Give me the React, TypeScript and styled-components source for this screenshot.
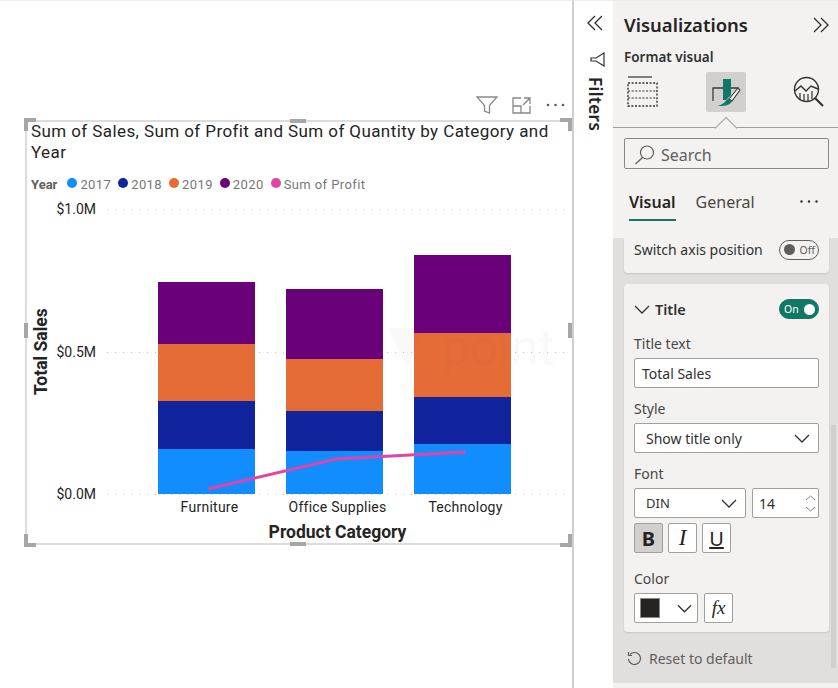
import styled, { createGlobalStyle } from "styled-components";

const chartFont = `Roboto, "Liberation Sans", sans-serif`;
const paneFont = `"Noto Sans", "Open Sans", sans-serif`;

const GlobalStyle = createGlobalStyle`
  html, body { margin: 0; padding: 0; background: #ffffff; }
  #root { width: 838px; height: 688px; overflow: hidden; }
  * { box-sizing: border-box; }
`;

const series = { y2017: "#118dff", y2018: "#12239e", y2019: "#e66c37", y2020: "#6b007b" };

const categories = [
  { name: "Furniture", parts: [45.5, 48, 57, 61.5] },
  { name: "Office Supplies", parts: [43.5, 39.5, 52, 70] },
  { name: "Technology", parts: [50.5, 46.5, 64.5, 77.5] },
];

const segmentColors = [series.y2017, series.y2018, series.y2019, series.y2020];

const legend = [
  { label: "2017", color: series.y2017 },
  { label: "2018", color: series.y2018 },
  { label: "2019", color: series.y2019 },
  { label: "2020", color: series.y2020 },
  { label: "Sum of Profit", color: "#e044a7" },
];

function Chevron({ width = 16 }: { width?: number }) {
  return (
    <svg width={width} height={9} viewBox="0 0 16 9" fill="none" stroke="#323130" strokeWidth="1.3">
      <path d="M1 1l7 7 7-7" />
    </svg>
  );
}

function FormatIcon() {
  return (
    <svg width="34" height="34" viewBox="0 0 34 34" fill="none">
      <path d="M4 26V13H14M22 13H29V18" stroke="#3b3a39" strokeWidth="1.3" />
      <path d="M14 4H22V20L17 25H14Z" fill="#117865" />
      <path d="M20 24L29 13L31 15L23 26Z" fill="#f3f2f1" stroke="#3b3a39" strokeWidth="1.1" />
      <path d="M9 31C14 31 21 31 23 26L20 23.500C17 24 16 29 9 31Z" fill="#117865" />
    </svg>
  );
}

function BuildIcon() {
  return (
    <svg width="32" height="32" viewBox="0 0 32 32" fill="none" stroke="#323130">
      <path d="M1 1h24" strokeWidth="1.2" />
      <rect x="1" y="7" width="29" height="23" strokeWidth="1.4" strokeDasharray="2 1.600" />
      <path d="M1 15h29M1 22h29" strokeWidth="1.2" strokeDasharray="2 1.600" />
    </svg>
  );
}

function AnalyticsIcon() {
  return (
    <svg width="32" height="32" viewBox="0 0 32 32" fill="none" stroke="#323130" strokeWidth="1.4">
      <circle cx="13.500" cy="13.500" r="12" />
      <path d="M2 15l6-5 5 5 5-5 7 3" />
      <path d="M7 17v7M11 18v7M15 18v7M19 15v8" strokeWidth="1.2" />
      <path d="M22 22l8 8" strokeWidth="2.200" />
    </svg>
  );
}

export default function App() {
  return (
    <>
      <GlobalStyle />
      <Page>
        <Canvas>
          <VisualHeader>
            <svg width="22" height="18" viewBox="0 0 22 18" fill="none" stroke="#8a8886" strokeWidth="1.300">
              <path d="M1 1h20l-7.500 8.500v7.500l-5-2v-5.500z" />
            </svg>
            <svg width="20" height="17" viewBox="0 0 20 17" fill="none" stroke="#8a8886" strokeWidth="1.300">
              <path d="M9 1H1v15h17v-7M1 9h8v7M12 1h6v6M18 1l-7 7" />
            </svg>
            <svg width="19" height="4" viewBox="0 0 19 4" fill="#605e5c">
              <circle cx="2" cy="2" r="1.300" />
              <circle cx="9.500" cy="2" r="1.300" />
              <circle cx="17" cy="2" r="1.300" />
            </svg>
          </VisualHeader>
          <VisualCard>
            <CornerHandle $corner="tl" />
            <CornerHandle $corner="tr" />
            <CornerHandle $corner="bl" />
            <CornerHandle $corner="br" />
            <SideHandle $side="top" />
            <SideHandle $side="bottom" />
            <SideHandle $side="left" />
            <SideHandle $side="right" />
            <ChartTitle>Sum of Sales, Sum of Profit and Sum of Quantity by Category and Year</ChartTitle>
            <Legend>
              <LegendName>Year</LegendName>
              {legend.map((item) => (
                <LegendItem key={item.label}>
                  <LegendDot $color={item.color} />
                  {item.label}
                </LegendItem>
              ))}
            </Legend>
            <ChartBody>
              <YTitle>Total Sales</YTitle>
              <YAxis>
                <span>$1.0M</span>
                <span>$0.5M</span>
                <span>$0.0M</span>
              </YAxis>
              <PlotColumn>
                <Plot>
                  <GridLine $at={0} />
                  <GridLine $at={50} />
                  <GridLine $at={100} />
                  <Bars>
                    {categories.map((cat) => (
                      <Bar key={cat.name}>
                        {[...cat.parts].reverse().map((height, i) => (
                          <Segment key={i} $color={segmentColors[3 - i]} style={{ height }} />
                        ))}
                      </Bar>
                    ))}
                  </Bars>
                  <Watermark>
                    <svg width="38" height="40" viewBox="0 0 38 40" fill="rgba(90,90,90,0.035)">
                      <path d="M0 0h38L19 40z" />
                    </svg>
                    <span>point</span>
                  </Watermark>
                  <ProfitLine width="461" height="285" viewBox="0 0 461 285" fill="none">
                    <path d="M101 280L229 250L358 243" stroke="#e044a7" strokeWidth="3" />
                  </ProfitLine>
                </Plot>
                <Categories>
                  {categories.map((cat) => (
                    <CategoryName key={cat.name}>{cat.name}</CategoryName>
                  ))}
                </Categories>
                <XTitle>Product Category</XTitle>
              </PlotColumn>
            </ChartBody>
          </VisualCard>
        </Canvas>

        <FilterRail>
          <svg width="16" height="16" viewBox="0 0 16 16" fill="none" stroke="#323130" strokeWidth="1.300">
            <path d="M8 1L1 8l7 7M15 1L8 8l7 7" />
          </svg>
          <FilterIcon width="15" height="15" viewBox="0 0 15 15" fill="none" stroke="#323130" strokeWidth="1.200">
            <path d="M14 1L6 6H1V9H6L14 14Z" />
          </FilterIcon>
          <FilterLabel>Filters</FilterLabel>
        </FilterRail>

        <Pane>
          <PaneTop>
            <PaneHeader>
              <PaneTitle>Visualizations</PaneTitle>
              <svg width="18" height="16" viewBox="0 0 18 16" fill="none" stroke="#323130" strokeWidth="1.300">
                <path d="M2 1l7 7-7 7M9 1l7 7-7 7" />
              </svg>
            </PaneHeader>
            <SubTitle>Format visual</SubTitle>
            <IconRow>
              <IconSlot>
                <BuildIcon />
              </IconSlot>
              <IconSlot $active>
                <FormatIcon />
              </IconSlot>
              <IconSlot>
                <AnalyticsIcon />
              </IconSlot>
            </IconRow>
            <Divider />
            <SearchBox>
              <svg width="21" height="20" viewBox="0 0 21 20" fill="none" stroke="#605e5c" strokeWidth="1.200">
                <circle cx="13" cy="7.500" r="6.500" />
                <path d="M8.500 12.500L1.500 19" />
              </svg>
              Search
            </SearchBox>
            <Tabs>
              <Tab $active>Visual</Tab>
              <Tab>General</Tab>
              <MoreDots>
                <svg width="18" height="3" viewBox="0 0 18 3" fill="#323130">
                  <circle cx="1.500" cy="1.500" r="1.200" />
                  <circle cx="9" cy="1.500" r="1.200" />
                  <circle cx="16.500" cy="1.500" r="1.200" />
                </svg>
              </MoreDots>
            </Tabs>
          </PaneTop>

          <Scroller>
            <ScrollThumb />
            <ClippedCard>
              <RowLabel>Switch axis position</RowLabel>
              <Toggle>
                <ToggleKnob />
                Off
              </Toggle>
            </ClippedCard>
            <Card>
              <CardHeader>
                <CardTitle>
                  <Chevron />
                  Title
                </CardTitle>
                <Toggle $on>
                  On
                  <ToggleKnob $on />
                </Toggle>
              </CardHeader>
              <FieldLabel>Title text</FieldLabel>
              <TextInput>Total Sales</TextInput>
              <FieldLabel $spaced>Style</FieldLabel>
              <SelectBox>
                Show title only
                <Chevron />
              </SelectBox>
              <FieldLabel $spaced>Font</FieldLabel>
              <ControlRow>
                <FontSelect>
                  DIN
                  <Chevron />
                </FontSelect>
                <SizeInput>
                  14
                  <Stepper>
                    <svg width="11" height="6" viewBox="0 0 11 6" fill="none" stroke="#8a8886">
                      <path d="M1 5l4.500-4 4.500 4" />
                    </svg>
                    <svg width="11" height="6" viewBox="0 0 11 6" fill="none" stroke="#8a8886">
                      <path d="M1 1l4.500 4 4.500-4" />
                    </svg>
                  </Stepper>
                </SizeInput>
              </ControlRow>
              <StyleButtons>
                <StyleButton $active $size={20}>
                  <strong>B</strong>
                </StyleButton>
                <StyleButton $serif $size={23}>
                  <em>I</em>
                </StyleButton>
                <StyleButton $size={20}>
                  <u>U</u>
                </StyleButton>
              </StyleButtons>
              <FieldLabel $wide>Color</FieldLabel>
              <ControlRow>
                <ColorSelect>
                  <Swatch />
                  <Chevron width={15} />
                </ColorSelect>
                <StyleButton $serif $size={19}>
                  <em>fx</em>
                </StyleButton>
              </ControlRow>
            </Card>
            <ResetRow>
              <svg width="15" height="15" viewBox="0 0 15 15" fill="none" stroke="#605e5c" strokeWidth="1.200">
                <path d="M3 3.500A6 6 0 1 1 1.500 8M1.500 1v3.500H5" />
              </svg>
              Reset to default
            </ResetRow>
          </Scroller>
          <PaneFoot />
        </Pane>
      </Page>
    </>
  );
}

const Page = styled.div`
  display: flex;
  width: 838px;
  height: 688px;
  background: #ffffff;
  overflow: hidden;
`;

const Canvas = styled.div`
  width: 572px;
  flex: none;
  padding: 95px 0 0 25px;
  border-top: 1px solid #ececec;
`;

const VisualHeader = styled.div`
  display: flex;
  align-items: center;
  justify-content: flex-end;
  gap: 14px;
  height: 18px;
  padding-right: 7px;
  margin-bottom: 6px;
`;

const VisualCard = styled.div`
  position: relative;
  width: 547px;
  height: 425px;
  border: 2px solid #dcdcdc;
  border-right: none;
  padding: 0 0 0 4px;
  font-family: ${chartFont};
`;

const CornerHandle = styled.span<{ $corner: "tl" | "tr" | "bl" | "br" }>`
  position: absolute;
  width: 12px;
  height: 13px;
  border: 0 solid #a6a6a6;
  ${(p) => (p.$corner[0] === "t" ? "top: -4px; border-top-width: 4px;" : "bottom: -4px; border-bottom-width: 4px;")}
  ${(p) => (p.$corner[1] === "l" ? "left: -3px; border-left-width: 4px;" : "right: 0; border-right-width: 4px;")}
`;

const SideHandle = styled.span<{ $side: "top" | "bottom" | "left" | "right" }>`
  position: absolute;
  background: #a6a6a6;
  ${(p) =>
    p.$side === "top" || p.$side === "bottom"
      ? `left: 263px; width: 16px; height: 4px; ${p.$side}: -3px;`
      : `top: 201px; width: 4px; height: 15px; ${p.$side}: ${p.$side === "left" ? -3 : 0}px;`}
`;

const ChartTitle = styled.div`
  width: 535px;
  margin-top: -1px;
  font-size: 17px;
  line-height: 21px;
  color: #252423;
  letter-spacing: 0.41px;
`;

const Legend = styled.div`
  display: flex;
  align-items: center;
  height: 20px;
  margin-top: 11px;
  font-size: 13px;
  color: #777777;
`;

const LegendName = styled.span`
  font-weight: 700;
  color: #605e5c;
  margin-right: 10px;
`;

const LegendItem = styled.span`
  display: flex;
  align-items: center;
  gap: 3px;
  margin-right: 7px;
  letter-spacing: 0.4px;
`;

const LegendDot = styled.i<{ $color: string }>`
  width: 10px;
  height: 10px;
  border-radius: 50%;
  background: ${(p) => p.$color};
  margin-top: -2px;
`;

const ChartBody = styled.div`
  display: flex;
  margin-top: 15px;
`;

const YTitle = styled.div`
  width: 20px;
  height: 285px;
  writing-mode: vertical-rl;
  transform: rotate(180deg);
  text-align: center;
  font-size: 17.5px;
  font-weight: 700;
  line-height: 20px;
  color: #252423;
`;

const YAxis = styled.div`
  width: 45px;
  height: 301px;
  margin-top: -8px;
  margin-right: 11px;
  display: flex;
  flex-direction: column;
  justify-content: space-between;
  align-items: flex-end;
  font-size: 14px;
  line-height: 16px;
  color: #252423;
`;

const PlotColumn = styled.div`
  width: 461px;
`;

const Plot = styled.div`
  position: relative;
  height: 285px;
`;

const GridLine = styled.div<{ $at: number }>`
  position: absolute;
  left: 0;
  right: 0;
  top: ${(p) => p.$at}%;
  height: 1px;
  background: repeating-linear-gradient(90deg, #c8c6c4 0 1px, transparent 1px 8px);
`;

const Bars = styled.div`
  position: absolute;
  inset: 0;
  display: flex;
  align-items: flex-end;
  gap: 31px;
  padding-left: 51px;
`;

const Bar = styled.div`
  width: 97px;
  display: flex;
  flex-direction: column;
`;

const Segment = styled.div<{ $color: string }>`
  background: ${(p) => p.$color};
`;

const Watermark = styled.div`
  position: absolute;
  left: 281px;
  top: 110px;
  display: flex;
  align-items: center;
  gap: 16px;
  font-size: 50px;
  color: rgba(90, 90, 90, 0.035);
`;

const ProfitLine = styled.svg`
  position: absolute;
  left: 0;
  top: 0;
`;

const Categories = styled.div`
  display: flex;
  gap: 31px;
  padding-left: 54px;
  margin-top: 4px;
`;

const CategoryName = styled.div`
  width: 97px;
  white-space: nowrap;
  display: flex;
  justify-content: center;
  font-size: 14px;
  line-height: 18px;
  color: #252423;
  letter-spacing: 0.25px;
`;

const XTitle = styled.div`
  margin-top: 6px;
  text-align: center;
  font-size: 17.5px;
  line-height: 20px;
  font-weight: 700;
  color: #252423;
`;

const FilterRail = styled.div`
  width: 41px;
  flex: none;
  display: flex;
  flex-direction: column;
  align-items: center;
  padding: 14px 0 0 2px;
  border-left: 2px solid #cfcfcf;
  border-top: 1px solid #ececec;
`;

const FilterIcon = styled.svg`
  margin-top: 21px;
  margin-left: 5px;
`;

const FilterLabel = styled.div`
  margin-top: 10px;
  writing-mode: vertical-rl;
  font-family: ${paneFont};
  font-size: 17px;
  font-weight: 600;
  line-height: 18px;
  letter-spacing: 0.4px;
  color: #252423;
`;

const Pane = styled.div`
  width: 225px;
  flex: none;
  display: flex;
  flex-direction: column;
  font-family: ${paneFont};
  color: #323130;
`;

const PaneTop = styled.div`
  height: 238px;
  background: #f3f2f1;
  border-top: 1px solid #ececec;
`;

const PaneHeader = styled.div`
  display: flex;
  align-items: center;
  justify-content: space-between;
  height: 47px;
  padding: 0 8px 0 11px;
`;

const PaneTitle = styled.div`
  font-size: 18.5px;
  font-weight: 600;
  color: #252423;
`;

const SubTitle = styled.div`
  padding-left: 11px;
  height: 18px;
  line-height: 18px;
  font-size: 13.5px;
  font-weight: 600;
`;

const IconRow = styled.div`
  display: flex;
  gap: 43px;
  margin-top: 6px;
  padding-left: 10px;
`;

const IconSlot = styled.div<{ $active?: boolean }>`
  width: 40px;
  height: 40px;
  display: flex;
  align-items: center;
  justify-content: center;
  border-radius: 2px;
  background: ${(p) => (p.$active ? "#d2d0ce" : "transparent")};
`;

const Divider = styled.div`
  position: relative;
  height: 1px;
  margin-top: 15px;
  background: #a19f9d;
  &::after {
    content: "";
    position: absolute;
    left: 105px;
    top: -7px;
    width: 15px;
    height: 15px;
    background: #f3f2f1;
    border-top: 1px solid #a19f9d;
    border-left: 1px solid #a19f9d;
    transform: rotate(45deg);
  }
`;

const SearchBox = styled.div`
  position: relative;
  display: flex;
  align-items: center;
  gap: 6px;
  height: 31px;
  margin: 10px 9px 0 11px;
  padding: 2px 0 0 9px;
  border: 1px solid #8a8886;
  border-radius: 2px;
  font-size: 16px;
  color: #605e5c;
`;

const Tabs = styled.div`
  display: flex;
  gap: 20px;
  height: 38px;
  margin-top: 14px;
  padding: 0 20px 0 16px;
`;

const Tab = styled.div<{ $active?: boolean }>`
  height: 38px;
  font-size: 16px;
  line-height: 38px;
  font-weight: ${(p) => (p.$active ? 600 : 400)};
  color: ${(p) => (p.$active ? "#252423" : "#484644")};
  border-bottom: 2px solid ${(p) => (p.$active ? "#117865" : "transparent")};
`;

const MoreDots = styled.div`
  margin-left: auto;
  line-height: 28px;
`;

const Scroller = styled.div`
  position: relative;
  flex: 1;
  background: #e1dfdd;
  padding: 0 9px 0 11px;
`;

const ScrollThumb = styled.div`
  position: absolute;
  right: 2px;
  top: 187px;
  width: 5px;
  height: 243px;
  background: #d2d0ce;
`;

const ClippedCard = styled.div`
  display: flex;
  align-items: center;
  justify-content: space-between;
  height: 35px;
  padding: 0 10px 12px;
  background: #f3f2f1;
  border-radius: 0 0 4px 4px;
  box-shadow: 0 1px 2px rgba(0, 0, 0, 0.12);
`;

const RowLabel = styled.div`
  font-size: 14px;
`;

const Toggle = styled.div<{ $on?: boolean }>`
  width: 40px;
  height: 20px;
  display: flex;
  align-items: center;
  justify-content: space-between;
  padding: 0 3px 0 4px;
  border-radius: 10px;
  font-size: 10.5px;
  border: 1px solid ${(p) => (p.$on ? "#117865" : "#605e5c")};
  background: ${(p) => (p.$on ? "#117865" : "transparent")};
  color: ${(p) => (p.$on ? "#ffffff" : "#605e5c")};
`;

const ToggleKnob = styled.span<{ $on?: boolean }>`
  width: 11px;
  height: 11px;
  border-radius: 50%;
  background: ${(p) => (p.$on ? "#ffffff" : "#605e5c")};
`;

const Card = styled.div`
  height: 348px;
  margin-top: 11px;
  padding: 0 10px;
  background: #f3f2f1;
  border-radius: 4px;
  box-shadow: 0 1px 2px rgba(0, 0, 0, 0.12);
`;

const CardHeader = styled.div`
  display: flex;
  align-items: center;
  justify-content: space-between;
  height: 50px;
`;

const CardTitle = styled.div`
  display: flex;
  align-items: center;
  gap: 5px;
  font-size: 14.5px;
  font-weight: 600;
`;

const FieldLabel = styled.div<{ $spaced?: boolean; $wide?: boolean }>`
  height: 20px;
  line-height: 20px;
  font-size: 14px;
  margin-top: ${(p) => (p.$spaced ? 11 : p.$wide ? 16 : 0)}px;
  margin-bottom: 4px;
  color: #484644;
`;

const Control = styled.div`
  height: 30px;
  display: flex;
  align-items: center;
  background: #ffffff;
  border: 1px solid #a19f9d;
  border-radius: 2px;
  font-size: 14px;
`;

const TextInput = styled(Control)`
  padding-left: 7px;
`;

const SelectBox = styled(Control)`
  justify-content: space-between;
  padding: 0 8px 0 11px;
`;

const ControlRow = styled.div`
  display: flex;
  gap: 6px;
`;

const FontSelect = styled(SelectBox)`
  width: 112px;
  font-size: 13px;
`;

const SizeInput = styled(Control)`
  width: 67px;
  justify-content: space-between;
  padding: 0 2px 0 6px;
`;

const Stepper = styled.div`
  display: flex;
  flex-direction: column;
  gap: 5px;
`;

const StyleButtons = styled.div`
  display: flex;
  gap: 5px;
  margin-top: 5px;
`;

const StyleButton = styled.div<{ $active?: boolean; $serif?: boolean; $size: number }>`
  width: 29px;
  height: 30px;
  display: flex;
  align-items: center;
  justify-content: center;
  background: ${(p) => (p.$active ? "#d2d0ce" : "#ffffff")};
  border: 1px solid #a19f9d;
  border-radius: 2px;
  font-size: ${(p) => p.$size}px;
  font-family: ${(p) => (p.$serif ? `"Liberation Serif", serif` : "inherit")};
  color: #252423;
`;

const ColorSelect = styled(Control)`
  width: 64px;
  justify-content: space-between;
  padding: 0 5px;
`;

const Swatch = styled.span`
  width: 20px;
  height: 20px;
  background: #252423;
  border: 1px solid #8a8886;
`;

const ResetRow = styled.div`
  display: flex;
  align-items: center;
  gap: 7px;
  height: 20px;
  margin: 16px 0 0 3px;
  font-size: 14px;
  color: #605e5c;
`;

const PaneFoot = styled.div`
  height: 5px;
  background: #f3f2f1;
`;
